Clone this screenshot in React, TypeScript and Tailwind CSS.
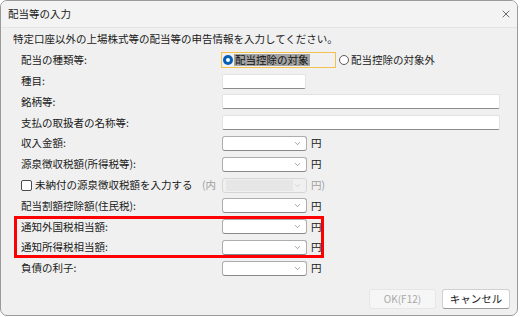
import React from "react";
import { X, ChevronDown } from "lucide-react";

const font = { fontFamily: '"Noto Sans CJK JP", "Noto Sans", sans-serif' };

const Combo: React.FC<{ disabled?: boolean }> = ({ disabled }) => (
  <div
    className={
      disabled
        ? "flex items-center justify-end w-[85px] h-[15px] rounded-[3px] border border-[#d6d6d6] bg-[#f0f0f0]"
        : "flex items-center justify-end w-[85px] h-[15px] rounded-[3px] border border-[#adadad] border-b-[#8a8a8a] bg-white"
    }
  >
    {disabled && <div className="flex-1 h-[11px] ml-[3px] bg-[#e6e6e6]" />}
    <ChevronDown
      size={9}
      strokeWidth={1.5}
      className={disabled ? "mr-[4px] text-[#c0c0c0]" : "mr-[4px] text-[#606060]"}
    />
  </div>
);

const TextBox: React.FC<{ wide?: boolean }> = ({ wide }) => (
  <div
    className={
      (wide ? "w-[278px]" : "w-[84px]") +
      " h-[15px] rounded-[2px] bg-white border border-[#e2e2e2] border-b-[#8c8c8c]"
    }
  />
);

const Row: React.FC<{ label: React.ReactNode; children?: React.ReactNode }> = ({
  label,
  children,
}) => (
  <div className="flex items-center h-[20.8px]">
    <div className="w-[201px] shrink-0 flex items-center">{label}</div>
    <div className="flex items-center">{children}</div>
  </div>
);

const Yen: React.FC<{ muted?: boolean }> = ({ muted }) => (
  <span className={muted ? "ml-[4px] text-[#a0a0a0]" : "ml-[4px] text-[#1a1a1a]"}>
    {muted ? "円)" : "円"}
  </span>
);

const App: React.FC = () => {
  return (
    <div className="w-[520px] h-[317px] bg-white" style={font}>
      <div className="w-[518px] h-[316px] rounded-[7px] border border-[#9a9a9a] bg-[#f0f0f0] overflow-hidden flex flex-col text-[10.5px] leading-none text-[#1a1a1a]">
        {/* Title bar */}
        <div className="h-[27px] shrink-0 flex items-center justify-between bg-[#f3f3f3] border-b border-[#e4e4e4] pl-[7px] pr-[5px]">
          <span className="text-[10.5px] text-[#1a1a1a]">配当等の入力</span>
          <X size={12} strokeWidth={1.3} className="text-[#222]" />
        </div>

        {/* Body */}
        <div className="flex-1 flex flex-col">
          <div className="h-[21px] flex items-center pl-[12px] mt-[1px]">
            特定口座以外の上場株式等の配当等の申告情報を入力してください。
          </div>

          <div className="flex flex-col pl-[20px]">
            <Row label="配当の種類等:">
              <div className="flex items-center h-[16px] w-[115px] -ml-[1px] border border-[#f2c14e] pl-[1px]">
                <div className="w-[10px] h-[10px] rounded-full bg-[#005fb8] flex items-center justify-center">
                  <div className="w-[4px] h-[4px] rounded-full bg-white" />
                </div>
                <span className="ml-[1px] bg-[#a3a3a3] text-[#111] px-[1px] h-[12px] flex items-center">
                  配当控除の対象
                </span>
              </div>
              <div className="flex items-center ml-[3px]">
                <div className="w-[10px] h-[10px] rounded-full border border-[#5a5a5a] bg-white" />
                <span className="ml-[2px]">配当控除の対象外</span>
              </div>
            </Row>
            <Row label="種目:">
              <TextBox />
            </Row>
            <Row label="銘柄等:">
              <TextBox wide />
            </Row>
            <Row label="支払の取扱者の名称等:">
              <TextBox wide />
            </Row>
            <Row label="収入金額:">
              <Combo />
              <Yen />
            </Row>
            <Row label="源泉徴収税額(所得税等):">
              <Combo />
              <Yen />
            </Row>
            <Row
              label={
                <div className="flex items-center justify-between w-full pr-[6px]">
                  <div className="flex items-center">
                    <div className="w-[11px] h-[11px] rounded-[2px] border border-[#4a4a4a] bg-white" />
                    <span className="ml-[3px]">未納付の源泉徴収税額を入力する</span>
                  </div>
                  <span className="text-[#a0a0a0]">(内</span>
                </div>
              }
            >
              <Combo disabled />
              <Yen muted />
            </Row>
            <Row label="配当割額控除額(住民税):">
              <Combo />
              <Yen />
            </Row>

            {/* Highlighted rows */}
            <div className="-ml-[7px] pl-[7px] w-[310px] shadow-[inset_0_0_0_3px_#ff0000]">
              <Row label="通知外国税相当額:">
                <Combo />
                <Yen />
              </Row>
              <Row label="通知所得税相当額:">
                <Combo />
                <Yen />
              </Row>
            </div>

            <Row label="負債の利子:">
              <Combo />
              <Yen />
            </Row>
          </div>

          {/* Buttons */}
          <div className="flex justify-end gap-[6px] pr-[7px] mt-[10px]">
            <button className="w-[67px] h-[20px] rounded-[3px] border border-[#e6e6e6] bg-[#f6f6f6] text-[#a8a8a8] text-[10px]">
              OK(F12)
            </button>
            <button className="w-[68px] h-[20px] rounded-[3px] border border-[#d0d0d0] border-b-[#9a9a9a] bg-white text-[#1a1a1a] text-[10.5px]">
              キャンセル
            </button>
          </div>
        </div>
      </div>
    </div>
  );
};

export default App;
